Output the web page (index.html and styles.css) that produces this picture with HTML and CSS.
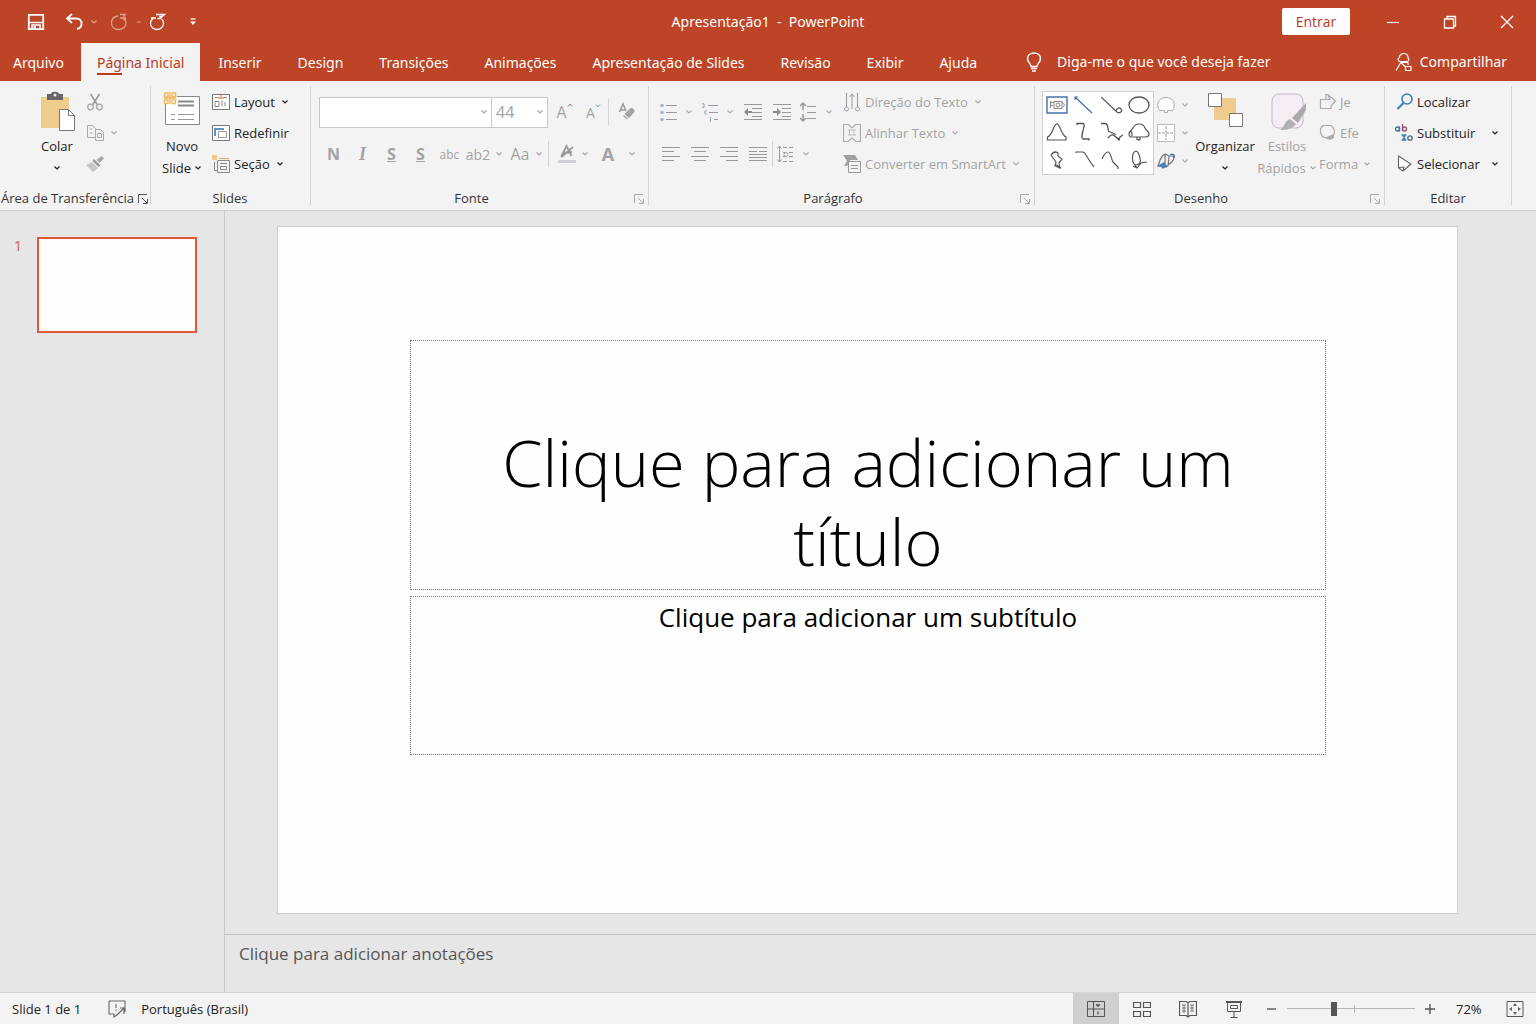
FILE: index.html
```html
<!DOCTYPE html>
<html lang="pt-BR">
<head>
    <meta charset="UTF-8">
    <meta name="viewport" content="width=device-width, initial-scale=1.0">
    <title>Apresentação1 - PowerPoint</title>
    <link rel="stylesheet" href="styles.css">
</head>
<body>

    <!-- shared glyphs -->
    <svg class="defs" width="0" height="0">
        <symbol id="caret" viewBox="0 0 8 8"><path d="M1.500 2.500 4 5l2.500-2.500" fill="none" stroke="currentColor" stroke-width="1.200"/></symbol>
        <symbol id="launch" viewBox="0 0 10 10"><path d="M.5 9V.5H9M4 4l5 5M9.500 5v4.500H5" fill="none" stroke="currentColor"/></symbol>
    </svg>

    <header class="titlebar">
        <div class="quick">
            <button class="q-btn" aria-label="Salvar">
                <svg width="18" height="18" viewBox="0 0 18 18"><path d="M1.800 1.800h14.400v14.400H1.800z" fill="none" stroke="#fff" stroke-width="1.800"/><path d="M2 9.500h14M5 16v-4h8v4" fill="none" stroke="#fff" stroke-width="1.600"/><path d="M6.500 13h2.500v3H6.500z" fill="#fff"/></svg>
            </button>
            <button class="q-btn split" aria-label="Desfazer">
                <svg width="18" height="18" viewBox="0 0 18 18"><path d="M7 1 2 5.500 7 10M2.500 5.500H11c4 0 6 2.500 5.500 6-.4 2.500-2 4-4.500 4.500" fill="none" stroke="#fff" stroke-width="1.800"/></svg>
                <svg class="caret dim" width="8" height="8"><use href="#caret"/></svg>
            </button>
            <button class="q-btn split dim redo" aria-label="Refazer">
                <svg width="18" height="18" viewBox="0 0 18 18"><path d="M8 3C4 3.500 1.500 6 1.500 10S4.500 16.500 8.500 16.500 16 14 16 10c0-2-.8-3.700-2-5M10 1.500h6M10 5h6M14 1.500v6" fill="none" stroke="#fff" stroke-width="1.300"/></svg>
                <svg class="caret" width="8" height="8"><path d="M2 4h4" stroke="#fff"/></svg>
            </button>
            <button class="q-btn" aria-label="Começar do início">
                <svg width="18" height="18" viewBox="0 0 18 18"><path d="M4.500 5C2.500 6.500 1.500 8 1.500 10.500c0 3.500 3 6 6.500 6s6.500-2.500 6.500-6c0-2-.6-3.500-2-4.500M2 5h5M7 1.500h8.500L11 5.500H8.500M10 3.500h3" fill="none" stroke="#fff" stroke-width="1.300"/></svg>
            </button>
            <button class="q-btn" aria-label="Personalizar barra">
                <svg width="8" height="10" viewBox="0 0 8 10"><path d="M1.500 2h5" stroke="#fff" stroke-width="1.200"/><path d="M1 4.500h6L4 8z" fill="#fff"/></svg>
            </button>
        </div>
        <h1 class="doc-title">Apresentação1&nbsp; - &nbsp;PowerPoint</h1>
        <div class="window">
            <button class="signin">Entrar</button>
            <button class="win-btn" aria-label="Minimizar"><svg width="14" height="14"><path d="M1 7.500h12" stroke="#fff" stroke-width="1.200"/></svg></button>
            <button class="win-btn" aria-label="Restaurar"><svg width="14" height="14"><path d="M1.500 4h9v9h-9zM4 3.500V1.500h8.500V11h-2" fill="none" stroke="#fff" stroke-width="1.300"/></svg></button>
            <button class="win-btn" aria-label="Fechar"><svg width="14" height="14"><path d="M1 1l12 12M13 1 1 13" stroke="#fff" stroke-width="1.400"/></svg></button>
        </div>
    </header>

    <nav class="tabs">
        <a href="#" class="tab file">Arquivo</a>
        <a href="#" class="tab active">Página Inicial</a>
        <a href="#" class="tab">Inserir</a>
        <a href="#" class="tab">Design</a>
        <a href="#" class="tab">Transições</a>
        <a href="#" class="tab">Animações</a>
        <a href="#" class="tab">Apresentação de Slides</a>
        <a href="#" class="tab">Revisão</a>
        <a href="#" class="tab">Exibir</a>
        <a href="#" class="tab">Ajuda</a>
        <button class="tell">
            <svg width="16" height="20" viewBox="0 0 16 20"><path d="M5 14.500c0-3-3.500-4-3.500-8C1.500 3.300 4.300 1 8 1s6.500 2.300 6.500 5.500c0 4-3.500 5-3.500 8zM5 16.500h6M6 19h4" fill="none" stroke="#fff" stroke-width="1.500"/></svg>
            Diga-me o que você deseja fazer
        </button>
        <button class="share">
            <svg width="18" height="20" viewBox="0 0 18 20"><path d="M5 9.500C2.500 9 2.500 6 4.500 5.500 4.500 3 6.500 1.500 9 1.500s4.500 2 4 4.500c1.500 1 1 3.500-1.500 3.500zM5.500 10.500h7M5.500 11 1 18.500M6 10.500l4 4M13 10v3M10.500 14.500h5.500v4h-5.500z" fill="none" stroke="#fff" stroke-width="1.200"/></svg>
            Compartilhar
        </button>
    </nav>

    <section class="ribbon">

        <div class="group clipboard">
            <div class="body">
                <button class="big">
                    <svg width="36" height="42" viewBox="0 0 36 42"><path d="M2 6h28v31H2z" fill="#efcd8d"/><path d="M8 3h4c0-3 8-3 8 0h4v6H8z" fill="#666"/><circle cx="16" cy="4" r="1.500" fill="#eee"/><path d="M20.500 18.500h9l6 6v15h-15z" fill="#fff" stroke="#777"/><path d="M29.500 18.500v6h6" fill="none" stroke="#777"/></svg>
                    <span>Colar</span>
                    <span><svg class="caret" width="8" height="8"><use href="#caret"/></svg></span>
                </button>
                <div class="stack off">
                    <button class="small" aria-label="Recortar">
                        <svg width="18" height="18" viewBox="0 0 18 18"><path d="M4.500 1l7 11M13.500 1l-7 11" fill="none" stroke="#999" stroke-width="1.500"/><circle cx="4.500" cy="14" r="2.800" fill="none" stroke="#aaa" stroke-width="1.300"/><circle cx="13.500" cy="14" r="2.800" fill="none" stroke="#aaa" stroke-width="1.300"/></svg>
                    </button>
                    <button class="small" aria-label="Copiar">
                        <svg width="18" height="18" viewBox="0 0 18 18"><path d="M1.500 1.500h5l3 3v9h-8zM3.500 5h3M3.500 9h3M9.500 5.500h5l3 3v8h-8zM11.500 9.500h4v4h-4z" fill="#f3f3f3" stroke="#aaa"/></svg>
                        <svg class="caret" width="8" height="8"><use href="#caret"/></svg>
                    </button>
                    <button class="small" aria-label="Pincel de formatação">
                        <svg width="18" height="18" viewBox="0 0 18 18"><path d="M15.500 1 18 3.500 13.500 8 10.500 5z" fill="#aaa"/><path d="M8 4l6.500 6.500-2 1.500L6.500 6z" fill="#999"/><path d="M6 7l6 6-5 4-7-7z" fill="#c6c6c6"/></svg>
                    </button>
                </div>
            </div>
            <div class="label">Área de Transferência<button class="launch" aria-label="Abrir opções"><svg width="10" height="10"><use href="#launch"/></svg></button></div>
        </div>

        <div class="group slides">
            <div class="body">
                <button class="big">
                    <svg width="38" height="42" viewBox="0 0 38 42"><path d="M2.500 12.500v21h34v-28H14" fill="#fff" stroke="#888"/><path d="M15 10.500h16M15 14.500h16" stroke="#888" stroke-width="2"/><path d="M8 23.500h4M15 23.500h16M8 28.500h4M15 28.500h16" stroke="#999"/><path d="M1.500 2h3.500v3.500H1.500zM9 2h3.500v3.500H9zM1.500 9h3.500v3.500H1.500zM9 9h3.500v3.500H9zM7 1v12M1 7h12" fill="none" stroke="#f0bd62" stroke-width="1.400"/></svg>
                    <span>Novo</span>
                    <span>Slide <svg class="caret" width="8" height="8"><use href="#caret"/></svg></span>
                </button>
                <div class="stack">
                    <button class="small">
                        <svg width="18" height="18" viewBox="0 0 18 18"><path d="M.5 1.500h17v15H.5z" fill="#fff" stroke="#777"/><path d="M3 4.500h3M12 4.500h3M3 8.500h4v5H3zM10 7.500v6M13 9v4" fill="none" stroke="#888"/><path d="M6 5h6M9 2v3" stroke="#e9965a" stroke-width="1.500"/></svg>
                        Layout <svg class="caret" width="8" height="8"><use href="#caret"/></svg>
                    </button>
                    <button class="small">
                        <svg width="18" height="18" viewBox="0 0 18 18"><path d="M.5 1.500h17v15H.5z" fill="#fff" stroke="#777"/><path d="M6.500 7.500h8v6h-8z" fill="#fff" stroke="#999"/><path d="M3 12V5h9" fill="none" stroke="#5c95c5" stroke-width="2"/></svg>
                        Redefinir
                    </button>
                    <button class="small">
                        <svg width="18" height="18" viewBox="0 0 18 18"><path d="M0 0h5v5H0z" fill="#f3c98b"/><path d="M7 3.500h10" stroke="#e9a55a"/><path d="M2.500 7v8.500H5M5.500 5.500h12v12h-12z" fill="none" stroke="#888"/><path d="M8 8.500h7M8.500 11.500h6v3h-6z" fill="none" stroke="#888"/></svg>
                        Seção <svg class="caret" width="8" height="8"><use href="#caret"/></svg>
                    </button>
                </div>
            </div>
            <div class="label">Slides</div>
        </div>

        <div class="group font off">
            <div class="body rows">
                <div class="row">
                    <div class="combo face">
                        <select aria-label="Fonte"><option></option></select>
                        <svg class="caret" width="8" height="8"><use href="#caret"/></svg>
                    </div>
                    <div class="combo size">
                        <select aria-label="Tamanho da fonte"><option>44</option></select>
                        <svg class="caret" width="8" height="8"><use href="#caret"/></svg>
                    </div>
                    <button class="tool grow" aria-label="Aumentar fonte">A<svg width="6" height="20"><path d="M1 4.500 3 2l2 2.500" fill="none" stroke="#888"/></svg></button>
                    <button class="tool shrink" aria-label="Diminuir fonte">A<svg width="6" height="20"><path d="M1 2.500 3 5l2-2.500" fill="none" stroke="#8a94b5"/></svg></button>
                    <i class="sep"></i>
                    <button class="tool clear" aria-label="Limpar formatação">
                        <svg width="18" height="20" viewBox="0 0 18 20"><path d="M1.500 10 5 2l3 7M2.500 8h5" fill="none" stroke="#999" stroke-width="1.500"/><path d="M12.500 6c3 0 5 2 3.500 4.500L11 16 6.500 12z" fill="#a4a4a4"/><path d="M5.500 13.500l4 3.500" stroke="#a4a4a4" stroke-width="1.500"/></svg>
                    </button>
                </div>
                <div class="row">
                    <button class="tool"><b>N</b></button>
                    <button class="tool italic">I</button>
                    <button class="tool"><b><u>S</u></b></button>
                    <button class="tool"><b><u>S</u></b></button>
                    <button class="tool mini">abc</button>
                    <button class="tool split">ab2<svg class="caret" width="8" height="8"><use href="#caret"/></svg></button>
                    <button class="tool split case">Aa<svg class="caret" width="8" height="8"><use href="#caret"/></svg></button>
                    <i class="sep"></i>
                    <button class="tool split wide" aria-label="Cor do realce">
                        <svg width="18" height="20" viewBox="0 0 18 20"><path d="M3 13 8.500 2l5 10M5 9l9-1M3.500 13 15 3" fill="none" stroke="#999" stroke-width="1.800"/><path d="M0 16h18v3H0z" fill="#d0d0d4"/></svg>
                        <svg class="caret" width="8" height="8"><use href="#caret"/></svg>
                    </button>
                    <button class="tool split color"><b>A</b><svg class="caret" width="8" height="8"><use href="#caret"/></svg></button>
                </div>
            </div>
            <div class="label">Fonte<button class="launch" aria-label="Abrir opções"><svg width="10" height="10"><use href="#launch"/></svg></button></div>
        </div>

        <div class="group paragraph off">
            <div class="body">
                <div class="rows">
                    <div class="row">
                        <button class="tool split" aria-label="Marcadores">
                            <svg width="18" height="20" viewBox="0 0 18 20"><path d="M6 3.500h11M6 10.500h11M6 17.500h11" stroke="#999"/><g fill="#a6b4c8"><circle cx="2" cy="3.500" r="1.800"/><circle cx="2" cy="10.500" r="1.800"/><circle cx="2" cy="17.500" r="1.800"/></g></svg>
                            <svg class="caret" width="8" height="8"><use href="#caret"/></svg>
                        </button>
                        <button class="tool split" aria-label="Numeração">
                            <svg width="18" height="20" viewBox="0 0 18 20"><path d="M7 3.500h10M8 10.500h9M13 17.500h4" stroke="#999"/><path d="M1 1.500c3 0 3 4 0 4M6 9c-3-1-3 4 0 3M9.500 15v5" fill="none" stroke="#a6b4c8" stroke-width="1.300"/></svg>
                            <svg class="caret" width="8" height="8"><use href="#caret"/></svg>
                        </button>
                        <button class="tool" aria-label="Diminuir recuo">
                            <svg width="18" height="20" viewBox="0 0 18 20"><path d="M0 2.500h18M8 6.500h10M8 10.500h10M8 14.500h10M0 17.500h18" stroke="#999"/><path d="M0 10l4-4v3h4v2H4v3z" fill="#8d8d93"/></svg>
                        </button>
                        <button class="tool" aria-label="Aumentar recuo">
                            <svg width="18" height="20" viewBox="0 0 18 20"><path d="M0 2.500h18M9 6.500h9M9 10.500h9M9 14.500h9M0 17.500h18" stroke="#999"/><path d="M8 10 4 6v3H0v2h4v3z" fill="#8d8d93"/></svg>
                        </button>
                        <button class="tool split" aria-label="Espaçamento">
                            <svg width="18" height="20" viewBox="0 0 18 20"><path d="M7 4.500h9M7 10.500h9M7 16.500h9" stroke="#999"/><path d="M3 1v7M0 4l3-3 3 3M3 12v7M0 16l3 3 3-3" fill="none" stroke="#999" stroke-width="1.500"/></svg>
                            <svg class="caret" width="8" height="8"><use href="#caret"/></svg>
                        </button>
                    </div>
                    <div class="row">
                        <button class="tool" aria-label="Alinhar à esquerda"><svg width="18" height="16"><path d="M0 1.500h18M0 5.500h12M0 10.500h18M0 14.500h12" stroke="#999"/></svg></button>
                        <button class="tool" aria-label="Centralizar"><svg width="18" height="16"><path d="M0 1.500h18M3 5.500h12M0 10.500h18M3 14.500h12" stroke="#999"/></svg></button>
                        <button class="tool" aria-label="Alinhar à direita"><svg width="18" height="16"><path d="M0 1.500h18M6 5.500h12M0 10.500h18M6 14.500h12" stroke="#999"/></svg></button>
                        <button class="tool" aria-label="Justificar"><svg width="18" height="16"><path d="M0 1.500h18M0 5.500h8M10 5.500h8M0 8.500h18M0 11.500h18M0 14.500h18" stroke="#999"/></svg></button>
                        <i class="sep"></i>
                        <button class="tool split" aria-label="Colunas">
                            <svg width="18" height="20" viewBox="0 0 18 20"><path d="M2.500 2v16M.5 4.500l2-2.500 2 2.500M.5 15.500l2 2.500 2-2.500" fill="none" stroke="#999"/><path d="M6 3.500h11M6 8.500h11M6 12.500h11M6 17.500h11" stroke="#999" stroke-dasharray="4 2"/><circle cx="9" cy="10.500" r="2" fill="none" stroke="#aaa"/></svg>
                            <svg class="caret" width="8" height="8"><use href="#caret"/></svg>
                        </button>
                    </div>
                </div>
                <div class="stack">
                    <button class="small">
                        <svg width="18" height="20" viewBox="0 0 18 20"><path d="M3.500 1v14M9 17V3M14.500 1v14M6.500 5 9 2l2.500 3" fill="none" stroke="#999"/><g fill="#f3f3f3" stroke="#9aa6b8"><circle cx="3.500" cy="17" r="2"/><circle cx="14.500" cy="17" r="2"/></g></svg>
                        Direção do Texto <svg class="caret" width="8" height="8"><use href="#caret"/></svg>
                    </button>
                    <button class="small">
                        <svg width="18" height="20" viewBox="0 0 18 20"><path d="M.5 1.500h5L9 5l3.500-3.500h5v17H13L9 15l-4 3.500H.5z" fill="none" stroke="#aaa" stroke-width="1.200"/><path d="M5 7h8M5 12h8M6.500 7v5M11 7v5" stroke="#bbb"/></svg>
                        Alinhar Texto <svg class="caret" width="8" height="8"><use href="#caret"/></svg>
                    </button>
                    <button class="small">
                        <svg width="18" height="20" viewBox="0 0 18 20"><path d="M0 1h12l3 5H7l-3 6H1l3-5z" fill="#a0a0a0"/><path d="M5.500 7.500h12v11h-12z" fill="#f3f3f3" stroke="#999"/><path d="M8 11.500h7M8 14.500h7" stroke="#999"/></svg>
                        Converter em SmartArt <svg class="caret" width="8" height="8"><use href="#caret"/></svg>
                    </button>
                </div>
            </div>
            <div class="label">Parágrafo<button class="launch" aria-label="Abrir opções"><svg width="10" height="10"><use href="#launch"/></svg></button></div>
        </div>

        <div class="group drawing">
            <div class="body">
                <div class="shapes">
                    <button aria-label="Caixa de texto"><svg width="22" height="18"><path d="M1 1h20v16H1z" fill="#fff" stroke="#4472a8" stroke-width="1.400"/><path d="M4 6.500h4M4.500 5v7M4 9.500h3M8 5.500h8v7H8zM16 6.500c3 1 3 4 0 5" fill="none" stroke="#888"/><circle cx="12" cy="9" r="2" fill="none" stroke="#888"/></svg></button>
                    <button aria-label="Linha"><svg width="22" height="18"><path d="M2 4V1h3M2 1l17 16" fill="none" stroke="#3e6ea8" stroke-width="1.200"/></svg></button>
                    <button aria-label="Conector"><svg width="22" height="18"><path d="M0 1l16 15c3 2 6-1 4-3s-4-1-5 2" fill="none" stroke="#555" stroke-width="1.200"/></svg></button>
                    <button aria-label="Elipse"><svg width="22" height="18"><ellipse cx="11" cy="9" rx="10" ry="8" fill="none" stroke="#555" stroke-width="1.300"/></svg></button>
                    <button aria-label="Triângulo"><svg width="22" height="20"><path d="M1.500 18v-3C7 13 7 3 10.500 2S15 13 20 15v3z" fill="none" stroke="#555" stroke-width="1.200"/></svg></button>
                    <button aria-label="Conector em ângulo"><svg width="22" height="20"><path d="M4 3V1.500h6c2 .5 1 3 0 7s-2 8 0 8.500h6v1.500" fill="none" stroke="#555" stroke-width="1.300"/></svg></button>
                    <button aria-label="Conector curvo"><svg width="22" height="20"><path d="M0 1.500h4c4 0 2 6 4 8l7 3M7 16c3-4 5-4 8-1l3 3 1-3 3-2M12 13l6 4" fill="none" stroke="#555" stroke-width="1.300"/></svg></button>
                    <button aria-label="Nuvem"><svg width="22" height="20"><path d="M1 12c0-3 3-4 4-6s3-4 6-4 5 1 6 4 4 3 4 6-2 3-4 3H4c-2 0-3-1-3-3zM9 15v2.500h3V15M3 9c1 1 1 3 1 5M11 17v2" fill="none" stroke="#555" stroke-width="1.200"/></svg></button>
                    <button aria-label="Forma livre"><svg width="22" height="20"><path d="M5 5c2-3 4-4 7-2v3l4 3-3 4 1 5-5-2 1-4zM9 14l6 4" fill="none" stroke="#555" stroke-width="1.200"/></svg></button>
                    <button aria-label="Curva"><svg width="22" height="20"><path d="M3 3V2h7c3 1 5 8 11 15" fill="none" stroke="#555" stroke-width="1.200"/></svg></button>
                    <button aria-label="Arco"><svg width="22" height="20"><path d="M1 9C3 5 4 2 7 2s3 7 5 10l5 5v2" fill="none" stroke="#555" stroke-width="1.200"/></svg></button>
                    <button aria-label="Rabisco"><svg width="22" height="20"><path d="M8 1C4 2 3 11 7 15c5 0 6-3 5-7S10 1 8 1M5 16l4 2 4-5 6-1M7 15l2 3" fill="none" stroke="#555" stroke-width="1.200"/></svg></button>
                </div>
                <div class="shape-nav off">
                    <button aria-label="Linha acima"><svg width="18" height="18"><path d="M2.500 14.500C-1 9 1 1.500 9 1.500s10 7.500 6.500 13h-5v2h-3v-2z" fill="#fff" stroke="#aaa"/></svg><svg class="caret" width="8" height="8"><use href="#caret"/></svg></button>
                    <button aria-label="Linha abaixo"><svg width="18" height="18"><path d="M.5.5h17v17H.5z" fill="#fff" stroke="#bbb"/><path d="M1 9h16M9 2v14" stroke="#999" stroke-dasharray="3 1"/></svg><svg class="caret" width="8" height="8"><use href="#caret"/></svg></button>
                    <button aria-label="Mais formas"><svg width="18" height="18"><path d="M1 14C3 8 4 4 8 2l4 2-1 10zM8 2v13M12 4h4c2 2 0 6-5 9" fill="none" stroke="#777" stroke-width="1.200"/><path d="M0 14l7-4 4 5-4 1-1 1-2-2z" fill="#4f80b5"/><path d="M13 3c3-2 5 0 4 3" fill="none" stroke="#4f80b5" stroke-width="1.500"/></svg><svg class="caret" width="8" height="8"><use href="#caret"/></svg></button>
                </div>
                <button class="big arrange">
                    <svg width="36" height="42" viewBox="0 0 36 42"><path d="M7 7h22v22H7z" fill="#efcb8e"/><path d="M1.500 2.500h13v13h-13zM22.500 22.500h13v13h-13z" fill="#fff" stroke="#777"/></svg>
                    <span>Organizar</span>
                    <span><svg class="caret" width="8" height="8"><use href="#caret"/></svg></span>
                </button>
                <button class="big styles off">
                    <svg width="38" height="42" viewBox="0 0 38 42"><rect x="4" y="3" width="31" height="34" rx="7" fill="#f5edf3" stroke="#c3b8c3"/><path d="M38 12v7l-8 13-6-5z" fill="#aaa"/><path d="M22 28l6 5c-3 4-8 6-16 6 5-3 4-9 10-11z" fill="#b0b0b0"/></svg>
                    <span>Estilos</span>
                    <span>Rápidos <svg class="caret" width="8" height="8"><use href="#caret"/></svg></span>
                </button>
                <div class="stack off">
                    <button class="small">
                        <svg width="18" height="18" viewBox="0 0 18 18"><path d="M1.500 6.500H7V1.500h2l7.500 6.500L12 13v2.500H1.500zM7 6.500h4L9 2" fill="none" stroke="#aaa" stroke-width="1.200"/></svg>
                        Je
                    </button>
                    <button class="small">
                        <svg width="18" height="18" viewBox="0 0 18 18"><path d="M4 1.500h8c3 2 4 6 3 9l-5 3H5C1 11 0 5 4 1.500z" fill="none" stroke="#aaa" stroke-width="1.200"/><path d="M6 14l4-2 5-2v4l-4 2z" fill="#aaa"/></svg>
                        Efe
                    </button>
                    <button class="small">Forma <svg class="caret" width="8" height="8"><use href="#caret"/></svg></button>
                </div>
            </div>
            <div class="label">Desenho<button class="launch off" aria-label="Abrir opções"><svg width="10" height="10"><use href="#launch"/></svg></button></div>
        </div>

        <div class="group edit">
            <div class="body">
                <div class="stack">
                    <button class="small">
                        <svg width="18" height="18" viewBox="0 0 18 18"><circle cx="12" cy="6" r="5" fill="none" stroke="#3f7fc4" stroke-width="1.600"/><path d="M8.500 10 2.500 16" stroke="#3f7fc4" stroke-width="2.200"/></svg>
                        Localizar
                    </button>
                    <button class="small">
                        <svg width="18" height="18" viewBox="0 0 18 18"><g fill="none" stroke-width="1.300"><circle cx="2.500" cy="5" r="2" stroke="#3d6d9c"/><path d="M4.500 2.500V7.500" stroke="#3d6d9c"/><path d="M7.500 0v7" stroke="#915364"/><circle cx="9.500" cy="5" r="2" stroke="#915364"/><path d="M7 10.500l4 6M11 10.500l-4 6M6.500 11h5M6.500 16h5" stroke="#3f7fc4"/><circle cx="15" cy="14" r="2.200" stroke="#566b80"/></g></svg>
                        Substituir <svg class="caret end" width="8" height="8"><use href="#caret"/></svg>
                    </button>
                    <button class="small">
                        <svg width="18" height="18" viewBox="0 0 18 18"><path d="M3.500 1 16 9l-8 7-4.500-3zM3.500 12.500 9 12l-1 4" fill="#fff" stroke="#666" stroke-width="1.100"/></svg>
                        Selecionar <svg class="caret end" width="8" height="8"><use href="#caret"/></svg>
                    </button>
                </div>
            </div>
            <div class="label">Editar</div>
        </div>

    </section>

    <main class="work">
        <aside class="thumbs">
            <span class="num">1</span>
            <button class="thumb" aria-label="Slide 1"></button>
        </aside>
        <div class="editor">
            <div class="canvas">
                <div class="slide">
                    <div class="holder title">Clique para adicionar um título</div>
                    <div class="holder subtitle">Clique para adicionar um subtítulo</div>
                </div>
            </div>
            <div class="notes">Clique para adicionar anotações</div>
        </div>
    </main>

    <footer class="status">
        <span>Slide 1 de 1</span>
        <button class="spell" aria-label="Revisão ortográfica">
            <svg width="18" height="18" viewBox="0 0 18 18"><path d="M1 1h16v11M1 1v13h5v3l4-3M8 4v4M8 9.500V11M9 15l4-4 3-3M12 8h4v6" fill="none" stroke="#666" stroke-width="1.100"/></svg>
        </button>
        <span>Português (Brasil)</span>
        <div class="views">
            <button class="view on" aria-label="Normal"><svg width="18" height="18"><path d="M.5 1.500h17v15H.5zM6.500 1.500v15M.5 9h17" fill="none" stroke="#555"/><path d="M9 5h4M11 5v2M11 11.500v3" stroke="#555" stroke-width="1.300"/></svg></button>
            <button class="view" aria-label="Classificação de slides"><svg width="18" height="18"><path d="M.5 2.500h7v5h-7zM10.500 2.500h7v5h-7zM.5 11.500h7v5h-7zM10.500 11.500h7v5h-7z" fill="none" stroke="#555" stroke-width="1.200"/></svg></button>
            <button class="view" aria-label="Modo de leitura"><svg width="18" height="18"><path d="M.5 1.500H7L9 3l2-1.500h6.500v14H11L9 17l-2-1.500H.5zM9 3v14" fill="none" stroke="#555" stroke-width="1.200"/><path d="M3 5h4M3 8h4M3 11h4M11 5h4M11 8h4M11 11h4M5 5v8M13 5v6" stroke="#777"/></svg></button>
            <button class="view" aria-label="Apresentação de slides"><svg width="18" height="18"><path d="M1 2h16" stroke="#555" stroke-width="2"/><path d="M2.500 3v8.500h13V3M9 12v5M5.500 17.500h7M5.500 5.500h7v3h-7z" fill="none" stroke="#555"/></svg></button>
            <button class="step" aria-label="Reduzir"><svg width="10" height="10"><path d="M0 5h9" stroke="#555" stroke-width="1.400"/></svg></button>
            <input type="range" class="zoom" min="0" max="100" value="36" aria-label="Zoom">
            <button class="step" aria-label="Ampliar"><svg width="10" height="10"><path d="M0 5h10M5 0v10" stroke="#555" stroke-width="1.400"/></svg></button>
            <span class="pct">72%</span>
            <button class="fit" aria-label="Ajustar à janela"><svg width="18" height="18"><path d="M1 1.500h16v15H1z" fill="none" stroke="#555"/><path d="M9 3l2 3H7zM9 15l2-3H7zM3 9l3-2v4zM15 9l-3-2v4z" fill="#666"/></svg></button>
        </div>
    </footer>

</body>
</html>
```
FILE: styles.css
```css
* {
    box-sizing: border-box;
}
body {
    margin: 0;
    min-height: 100vh;
    display: flex;
    flex-direction: column;
    font-family: "Open Sans", "Noto Sans", sans-serif;
    font-size: 13px;
    color: #222;
    background: #e6e6e6;
}
button {
    font: inherit;
    color: inherit;
    background: none;
    border: none;
    padding: 0;
    cursor: pointer;
    white-space: nowrap;
}
svg {
    flex: none;
    display: block;
}
.defs {
    position: absolute;
}
.dim {
    opacity: 0.5;
}

/* title bar */
.titlebar {
    display: grid;
    grid-template-columns: 1fr auto 1fr;
    align-items: center;
    height: 43px;
    background: #bd4426;
    color: #fff;
}
.quick {
    display: flex;
    gap: 20px;
    padding-left: 27px;
}
.q-btn {
    display: flex;
    align-items: center;
}
.q-btn.split {
    gap: 7px;
}
.q-btn.split + .q-btn {
    margin-left: -8px;
}
.q-btn.redo + .q-btn {
    margin-left: -14px;
}
.q-btn:last-child {
    margin-left: 2px;
}
.doc-title {
    margin: 0;
    font-family: "Noto Sans", sans-serif;
    font-size: 14px;
    font-weight: 400;
}
.window {
    display: flex;
    justify-content: flex-end;
    align-items: center;
    padding-right: 1px;
}
.signin {
    width: 68px;
    height: 27px;
    margin-right: 14px;
    background: #fff;
    color: #b93c1e;
    font-size: 14px;
    border-radius: 2px;
}
.win-btn {
    display: grid;
    place-items: center;
    width: 57px;
    height: 42px;
}

/* tabs */
.tabs {
    display: flex;
    height: 38px;
    background: #bd4426;
    color: #fff;
    font-family: "Noto Sans", sans-serif;
    font-size: 14px;
    line-height: 40px;
}
.tab {
    padding: 0 18px;
    color: #fff;
    text-decoration: none;
    white-space: nowrap;
}
.tab.file {
    padding: 0 17px 0 13px;
}
.tab.active {
    position: relative;
    padding: 0 16px;
    background: #f3f3f3;
    color: #b93c1e;
}
.tab.active::after {
    content: "";
    position: absolute;
    left: 16px;
    bottom: 6px;
    width: 25px;
    height: 2px;
    background: #b93c1e;
}
.tell,
.share {
    display: flex;
    align-items: center;
}
.tell {
    gap: 15px;
    margin-left: 31px;
}
.share {
    gap: 7px;
    margin-left: auto;
    margin-right: 29px;
}

/* ribbon */
.ribbon {
    display: flex;
    height: 130px;
    padding: 5px 0 0;
    background: #f3f3f3;
    border-bottom: 1px solid #cfcfcf;
}
.group {
    flex: none;
    display: flex;
    flex-direction: column;
    height: 119px;
    border-right: 1px solid #d2d2d2;
}
.body {
    flex: 1;
    display: flex;
}
.label {
    position: relative;
    height: 14px;
    padding-right: 24px;
    line-height: 14px;
    text-align: center;
    color: #333;
}
.launch {
    position: absolute;
    right: 4px;
    top: 3px;
    color: #555;
}
.off .launch,
.launch.off {
    color: #aaa;
}
.off {
    color: #a3a3a3;
}
.off .caret {
    color: #aaa;
}
.big {
    display: flex;
    flex-direction: column;
    align-items: center;
    align-self: flex-start;
    padding-top: 5px;
    line-height: 22px;
}
.big > svg {
    margin-bottom: 2px;
}
.big span {
    display: flex;
    align-items: center;
    gap: 3px;
    height: 22px;
}
.stack {
    display: grid;
    align-content: start;
    grid-auto-rows: 31px;
}
.small {
    display: flex;
    align-items: center;
    gap: 4px;
}
.small .caret {
    margin-left: 2px;
}
.small .caret.end {
    margin-left: auto;
}
.rows {
    flex-direction: column;
    padding-top: 5px;
}
.row {
    display: flex;
    align-items: center;
    height: 42px;
}
.sep {
    flex: none;
    width: 1px;
    height: 26px;
    background: #d2d2d2;
}
.tool {
    flex: none;
    display: flex;
    align-items: center;
    justify-content: center;
    width: 29px;
    height: 28px;
    font-size: 16px;
}
.tool.split {
    gap: 5px;
    width: 41px;
}

.clipboard {
    width: 151px;
}
.clipboard .big {
    width: 44px;
    margin: 0 7px 0 35px;
}
.clipboard .label {
    padding: 0 0 0 1px;
    text-align: left;
}
.clipboard .launch {
    right: 2px;
}
.slides {
    width: 160px;
    padding-left: 9px;
}
.slides .label,
.edit .label {
    padding-right: 10px;
}
.slides .big {
    width: 44px;
    margin-right: 8px;
}
.font {
    width: 338px;
    padding-left: 8px;
}
.combo {
    position: relative;
    height: 31px;
}
.combo select {
    width: 100%;
    height: 31px;
    padding: 0 4px;
    appearance: none;
    font: inherit;
    font-size: 16px;
    color: #a3a3a3;
    background: #fff;
    border: 1px solid #c8c8c8;
    border-radius: 0;
}
.combo .caret {
    position: absolute;
    right: 4px;
    top: 11px;
    pointer-events: none;
}
.face {
    width: 173px;
}
.size {
    width: 57px;
    margin-left: -1px;
}
.tool.grow {
    margin-left: 2px;
}
.tool.shrink {
    font-size: 14px;
}
.tool.clear {
    width: 36px;
}
.tool.italic {
    font-family: "Liberation Serif", serif;
    font-style: italic;
    font-weight: bold;
    font-size: 18px;
}
.tool.mini {
    font-size: 12px;
}
.font .row .split {
    font-size: 14px;
}
.font .row .case {
    width: 43px;
    font-size: 16px;
}
.font .row .wide {
    width: 48px;
}
.font .row .color {
    gap: 14px;
    width: 44px;
    font-size: 18px;
}
.paragraph {
    width: 386px;
    padding-left: 7px;
}
.paragraph .rows {
    width: 187px;
}
.paragraph .tool.split {
    gap: 7px;
}
.drawing {
    width: 350px;
    padding-left: 7px;
}
.shapes {
    display: grid;
    grid-template-columns: repeat(4, 1fr);
    width: 112px;
    height: 84px;
    margin-top: 5px;
    background: #fff;
    border: 1px solid #d0d0d0;
}
.shapes button {
    display: grid;
    place-items: center;
}
.shape-nav {
    display: grid;
    width: 37px;
    height: 84px;
    margin-top: 5px;
}
.shape-nav button {
    display: flex;
    align-items: center;
    gap: 6px;
    padding-left: 3px;
}
.arrange {
    width: 68px;
}
.styles {
    width: 56px;
    margin-right: 4px;
}
.drawing .small {
    gap: 3px;
}
.edit {
    width: 127px;
    padding-left: 10px;
}
.edit .stack {
    width: 104px;
}

/* work area */
.work {
    flex: 1;
    display: flex;
}
.thumbs {
    display: flex;
    align-items: flex-start;
    width: 225px;
    padding: 26px 27px 0 14px;
    border-right: 1px solid #c9c9c9;
}
.num {
    width: 23px;
    font-size: 14px;
    line-height: 18px;
    color: #d9583a;
}
.thumb {
    flex: 1;
    height: 96px;
    background: #fdfdfd;
    border: 2px solid #e0593b;
}
.editor {
    flex: 1;
    display: flex;
    flex-direction: column;
}
.canvas {
    flex: 1;
    display: flex;
    padding: 15px 78px 20px 52px;
}
.slide {
    flex: 1;
    display: grid;
    grid-template-columns: 132fr 917fr 131fr;
    grid-template-rows: 113fr 251fr 6fr 159fr 158fr;
    background: #fefefe;
    border: 1px solid #cfcfcf;
}
.holder {
    grid-column: 2;
    border: 1px dotted #777;
    text-align: center;
    color: #000;
}
.title {
    grid-row: 2;
    display: flex;
    align-items: flex-end;
    justify-content: center;
    padding: 0 60px 8px;
    font-size: 65px;
    font-weight: 300;
    line-height: 79px;
}
.subtitle {
    grid-row: 4;
    padding-top: 2px;
    font-size: 26px;
    line-height: 36px;
}
.notes {
    height: 58px;
    padding: 7px 14px;
    border-top: 1px solid #c4c4c4;
    font-size: 17px;
    line-height: 24px;
    color: #555;
}

/* status bar */
.status {
    display: flex;
    align-items: center;
    height: 32px;
    padding-left: 12px;
    background: #f3f3f3;
    border-top: 1px solid #d4d4d4;
}
.spell {
    margin: 0 15px 0 27px;
}
.views {
    display: flex;
    align-items: center;
    height: 31px;
    margin-left: auto;
}
.view {
    display: grid;
    place-items: center;
    width: 46px;
    height: 31px;
}
.view.on {
    background: #d0d0d0;
}
.step {
    margin: 0 10px;
}
.zoom {
    width: 128px;
    height: 16px;
    margin: 0;
    appearance: none;
    background: linear-gradient(#b5b5b5, #b5b5b5) center / 100% 1px no-repeat,
        linear-gradient(#b5b5b5, #b5b5b5) 53% center / 1px 8px no-repeat;
}
.zoom::-webkit-slider-thumb {
    appearance: none;
    width: 6px;
    height: 14px;
    background: #555;
}
.pct {
    width: 61px;
    padding-left: 11px;
}
.fit {
    margin-right: 12px;
}
```
